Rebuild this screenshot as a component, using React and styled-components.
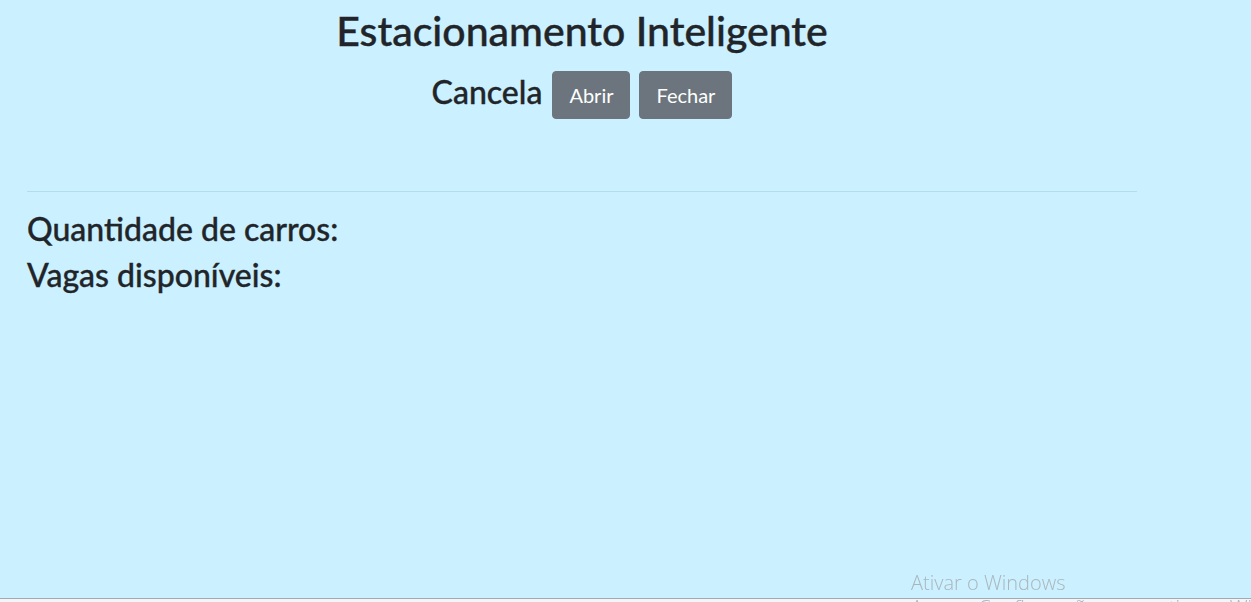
import React from "react";
import styled, { createGlobalStyle } from "styled-components";

const GlobalStyle = createGlobalStyle`
    html, body {
        margin: 0;
        padding: 0;
        height: 100%;
        overflow: hidden;
    }
    body {
        background: #cbf0ff;
        color: #212529;
        font-family: "Lato", "Open Sans", sans-serif;
    }
`

const SPage = styled.div`
    width: 1110px;
    margin-left: 27px;
    padding-top: 6px;
`

const STitle = styled.h1`
    margin: 0;
    font-size: 41px;
    font-weight: 500;
    line-height: 1.2;
    text-align: center;
    -webkit-text-stroke: 0.4px #212529;
`

const SGateRow = styled.div`
    display: flex;
    justify-content: center;
    align-items: center;
    margin-top: 16px;
`

const SGateLabel = styled.h2`
    margin: 0 10px 5px 0;
    font-size: 32px;
    font-weight: 500;
    line-height: 1.2;
    -webkit-text-stroke: 0.35px #212529;
`

const SButton = styled.button`
    height: 48px;
    padding: 0 16px;
    margin-right: ${(p) => p.$gap || 0}px;
    font-family: inherit;
    font-size: 20px;
    line-height: 1.5;
    color: #fff;
    background-color: #6c757d;
    border: 1px solid #6c757d;
    border-radius: 4px;
    cursor: pointer;
`

const SDivider = styled.hr`
    margin: 72px 0 0;
    border: 0;
    border-top: 1px solid #b3dcec;
`

const SStats = styled.div`
    display: flex;
    flex-direction: column;
    gap: 7px;
    margin-top: 18px;
`

const SStat = styled.h2`
    margin: 0;
    font-size: 32px;
    font-weight: 500;
    line-height: 1.2;
    -webkit-text-stroke: 0.35px #212529;
`

const SWatermark = styled.div`
    position: fixed;
    left: 911px;
    top: 570px;
    font-family: "Open Sans", sans-serif;
    font-size: 20px;
    font-weight: 300;
    line-height: 25px;
    color: #aab6bc;
    white-space: nowrap;
    pointer-events: none;
    z-index: 2;
`

const SScreenEdge = styled.div`
    position: fixed;
    left: 0;
    right: 0;
    bottom: 0;
    height: 3px;
    background: #f2f6f8;
    border-top: 1px solid #a4a9ac;
    z-index: 1;
`

export default function App() {
    return (
        <>
            <GlobalStyle />
            <SPage>
                <STitle>Estacionamento Inteligente</STitle>
                <SGateRow>
                    <SGateLabel>Cancela</SGateLabel>
                    <SButton $gap={9}>Abrir</SButton>
                    <SButton>Fechar</SButton>
                </SGateRow>
                <SDivider />
                <SStats>
                    <SStat>Quantidade de carros:</SStat>
                    <SStat>Vagas disponíveis:</SStat>
                </SStats>
            </SPage>
            <SScreenEdge />
            <SWatermark>
                Ativar o Windows
                <br />
                Acesse Configurações para ativar o Windows.
            </SWatermark>
        </>
    );
}
